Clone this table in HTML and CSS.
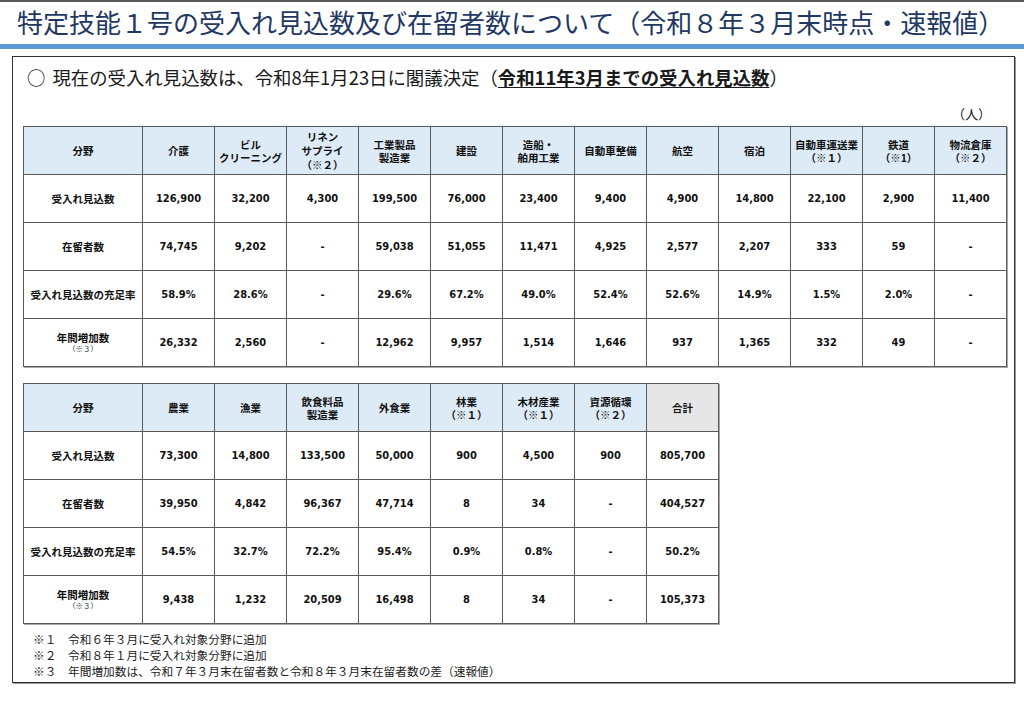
FILE: index.html
```html
<!DOCTYPE html>
<html lang="ja">
<head>
<meta charset="utf-8">
<title>特定技能１号の受入れ見込数及び在留者数</title>
<link rel="stylesheet" href="styles.css">
</head>
<body>
<header class="head">
  <h1 class="title">特定技能１号の受入れ見込数及び在留者数について（令和８年３月末時点・速報値）</h1>
  <div class="bar"></div>
</header>
<main class="panel">
  <p class="intro"><span class="circle">○</span>現在の受入れ見込数は、令和8年1月23日に閣議決定（<span class="em">令和11年3月までの受入れ見込数</span>）</p>
  <p class="unit">（人）</p>
  <table class="grid t1">
    <colgroup><col class="c0"><col span="12" class="cn"></colgroup>
    <thead>
      <tr><th>分野</th><th>介護</th><th>ビル<br>クリーニング</th><th class="tall">リネン<br>サプライ<br>（※２）</th><th>工業製品<br>製造業</th><th>建設</th><th>造船・<br>舶用工業</th><th>自動車整備</th><th>航空</th><th>宿泊</th><th>自動車運送業<br>（※１）</th><th>鉄道<br>（※1）</th><th>物流倉庫<br>（※２）</th></tr>
    </thead>
    <tbody>
      <tr><th class="lab">受入れ見込数</th><td>126,900</td><td>32,200</td><td>4,300</td><td>199,500</td><td>76,000</td><td>23,400</td><td>9,400</td><td>4,900</td><td>14,800</td><td>22,100</td><td>2,900</td><td>11,400</td></tr>
      <tr><th class="lab">在留者数</th><td>74,745</td><td>9,202</td><td>-</td><td>59,038</td><td>51,055</td><td>11,471</td><td>4,925</td><td>2,577</td><td>2,207</td><td>333</td><td>59</td><td>-</td></tr>
      <tr><th class="lab">受入れ見込数の充足率</th><td>58.9%</td><td>28.6%</td><td>-</td><td>29.6%</td><td>67.2%</td><td>49.0%</td><td>52.4%</td><td>52.6%</td><td>14.9%</td><td>1.5%</td><td>2.0%</td><td>-</td></tr>
      <tr><th class="lab">年間増加数<span class="sub">（※３）</span></th><td>26,332</td><td>2,560</td><td>-</td><td>12,962</td><td>9,957</td><td>1,514</td><td>1,646</td><td>937</td><td>1,365</td><td>332</td><td>49</td><td>-</td></tr>
    </tbody>
  </table>
  <table class="grid t2">
    <colgroup><col class="c0"><col span="8" class="cn"></colgroup>
    <thead>
      <tr><th>分野</th><th>農業</th><th>漁業</th><th>飲食料品<br>製造業</th><th>外食業</th><th>林業<br>（※１）</th><th>木材産業<br>（※１）</th><th>資源循環<br>（※２）</th><th class="total">合計</th></tr>
    </thead>
    <tbody>
      <tr><th class="lab">受入れ見込数</th><td>73,300</td><td>14,800</td><td>133,500</td><td>50,000</td><td>900</td><td>4,500</td><td>900</td><td>805,700</td></tr>
      <tr><th class="lab">在留者数</th><td>39,950</td><td>4,842</td><td>96,367</td><td>47,714</td><td>8</td><td>34</td><td>-</td><td>404,527</td></tr>
      <tr><th class="lab">受入れ見込数の充足率</th><td>54.5%</td><td>32.7%</td><td>72.2%</td><td>95.4%</td><td>0.9%</td><td>0.8%</td><td>-</td><td>50.2%</td></tr>
      <tr><th class="lab">年間増加数<span class="sub">（※３）</span></th><td>9,438</td><td>1,232</td><td>20,509</td><td>16,498</td><td>8</td><td>34</td><td>-</td><td>105,373</td></tr>
    </tbody>
  </table>
  <ul class="notes">
    <li><span class="mark">※１</span>令和６年３月に受入れ対象分野に追加</li>
    <li><span class="mark">※２</span>令和８年１月に受入れ対象分野に追加</li>
    <li><span class="mark">※３</span>年間増加数は、令和７年３月末在留者数と令和８年３月末在留者数の差（速報値）</li>
  </ul>
</main>
</body>
</html>
```

FILE: styles.css
```css
html, body {
  margin: 0;
  padding: 0;
  background: #ffffff;
}
body {
  font-family: "Noto Sans CJK JP", "Noto Sans", sans-serif;
  color: #1a1a1a;
  width: 1024px;
  height: 710px;
  overflow: hidden;
}
.head {
  border-top: 2px solid #595959;
}
.title {
  margin: 0;
  height: 40px;
  line-height: 40px;
  padding-left: 17px;
  font-size: 26px;
  font-weight: 400;
  color: #1f3864;
  white-space: nowrap;
}
.bar {
  margin-top: 2px;
  height: 5px;
  background: #5b9bd5;
}
.panel {
  display: flex;
  flex-direction: column;
  margin: 7px 9px 0 12px;
  border: 1px solid #333333;
  box-shadow: 1px 1px 0 #9a9a9a;
  padding: 8px 8px 3px 10px;
}
.intro {
  margin: 0 0 0 4px;
  height: 24px;
  line-height: 24px;
  font-size: 18.4px;
  color: #1a1a1a;
  white-space: nowrap;
}
.circle {
  display: inline-block;
  margin-right: 7px;
}
.em {
  font-weight: 700;
  text-decoration: underline;
  text-underline-offset: 2px;
}
.unit {
  margin: 16px 0 3px 0;
  padding-right: 15px;
  height: 18px;
  line-height: 18px;
  font-size: 13px;
  text-align: right;
}
.grid {
  border-collapse: collapse;
  table-layout: fixed;
  box-shadow: 1px 1px 0 #a8a8a8;
}
.t1 { width: 983px; }
.t2 { width: 695px; margin-top: 16px; }
.c0 { width: 119px; }
.cn { width: 72px; }
.grid tr { height: 48px; }
.grid th, .grid td {
  border: 1px solid #595959;
  padding: 0 2px;
  text-align: center;
  vertical-align: middle;
  color: #111111;
}
.grid thead th {
  background: #ddebf7;
  font-family: "Noto Sans CJK JP", sans-serif;
  font-size: 10.5px;
  line-height: 13px;
  font-weight: 700;
}
.grid thead th.tall { line-height: 14px; }
.grid thead th.total { background: #e6e6e6; }
.grid .lab {
  font-family: "Noto Sans CJK JP", sans-serif;
  font-size: 10.5px;
  line-height: 13px;
  font-weight: 700;
  background: #ffffff;
}
.sub {
  display: block;
  font-size: 7.5px;
  line-height: 10px;
  font-weight: 400;
  color: #333333;
}
.grid td {
  font-family: "DejaVu Sans Condensed", "DejaVu Sans", sans-serif;
  font-size: 11px;
  font-weight: 700;
}
.notes {
  list-style: none;
  margin: 7px 0 0 0;
  padding: 0 0 0 10px;
  font-size: 11.7px;
  line-height: 16px;
  color: #222222;
}
.notes li { white-space: nowrap; }
.mark {
  display: inline-block;
  width: 35px;
}
```
